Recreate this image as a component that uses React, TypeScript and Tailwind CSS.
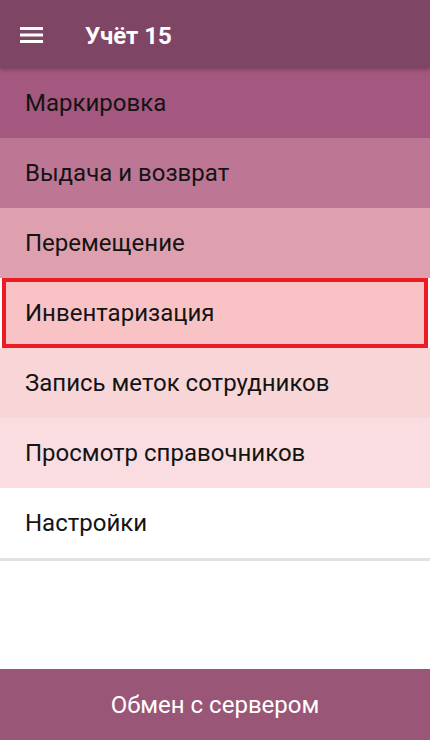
const items = [
  { label: "Маркировка", bg: "bg-[#a5587f]" },
  { label: "Выдача и возврат", bg: "bg-[#bd7795]" },
  { label: "Перемещение", bg: "bg-[#dea0ae]" },
  { label: "Инвентаризация", bg: "bg-[#f9c3c6]", selected: true },
  { label: "Запись меток сотрудников", bg: "bg-[#f8d6d8]" },
  { label: "Просмотр справочников", bg: "bg-[#f9dde0]" },
  { label: "Настройки", bg: "bg-white" },
]

export default function App() {
  return (
    <div className="flex h-[740px] w-[430px] flex-col bg-white font-['Roboto',sans-serif]">
      {/* App bar */}
      <header className="relative z-10 flex h-[68px] shrink-0 items-center bg-[#7f4565] pt-[4px] shadow-[0_2px_4px_rgba(0,0,0,0.25)]">
        <div className="flex w-[85px] justify-start pl-[19px]">
          <svg width="26" height="20" viewBox="0 0 26 20">
            <rect x="1" y="1" width="23" height="3" fill="white" />
            <rect x="1" y="7.5" width="23" height="3" fill="white" />
            <rect x="1" y="14" width="23" height="3" fill="white" />
          </svg>
        </div>
        <h1 className="text-[24px] font-bold text-white">Учёт 15</h1>
      </header>

      {/* Menu list */}
      <main className="flex-1">
        {items.map((item) => (
          <div
            key={item.label}
            className={`flex h-[70px] items-center ${item.bg} ${
              item.selected ? "mx-[2px] border-[4px] border-[#ec1c24] pl-[19px]" : "pl-[25px]"
            }`}
          >
            <span className="text-[24px] text-[#141414]">{item.label}</span>
          </div>
        ))}
        <div className="h-[3px] bg-[#e2e2e2]" />
      </main>

      {/* Bottom action */}
      <button className="flex h-[71px] shrink-0 items-center justify-center bg-[#9a5676] text-[24px] text-white">
        Обмен с сервером
      </button>
    </div>
  )
}
